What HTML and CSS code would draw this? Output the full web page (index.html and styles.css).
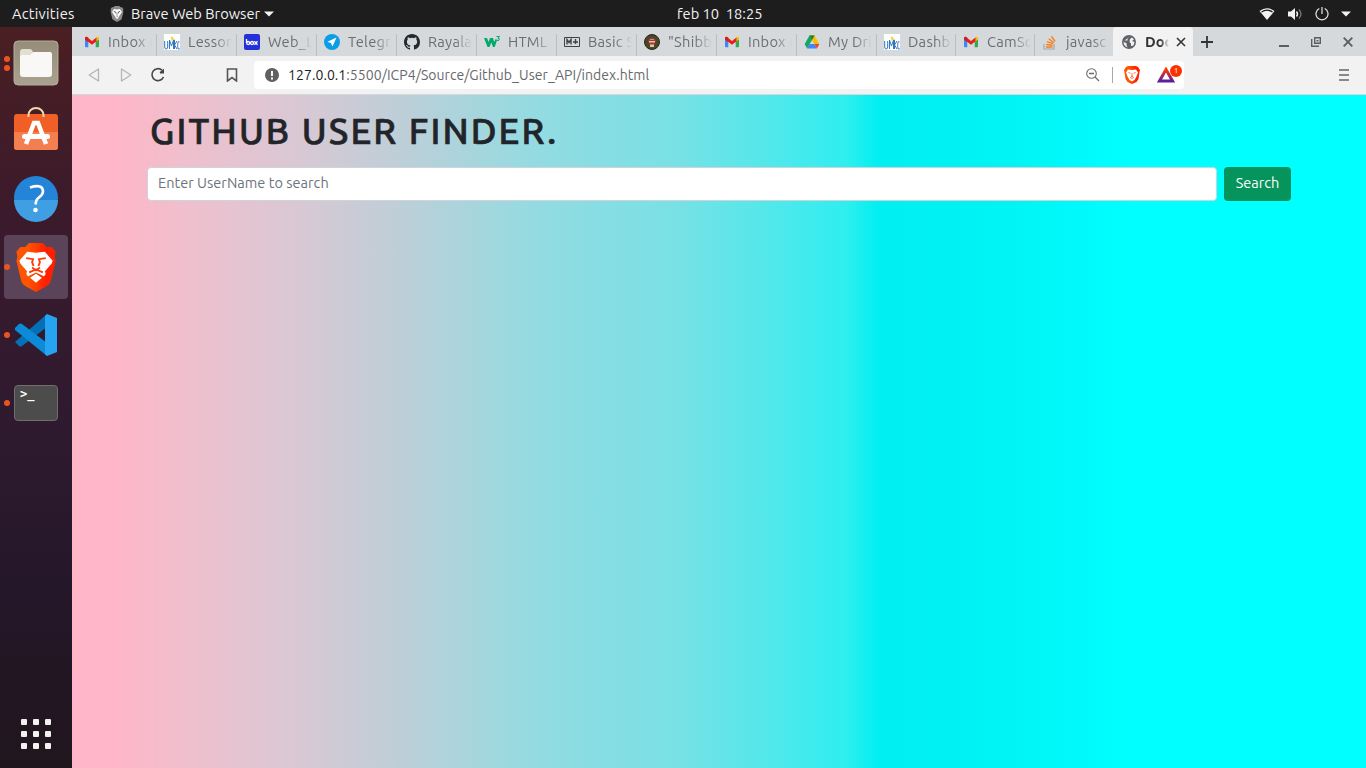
FILE: index.html
```html
<!DOCTYPE html>
<html lang="en">
<head>
<meta charset="utf-8">
<title>Github User Finder</title>
<link rel="stylesheet" href="styles.css">
</head>
<body>
<svg width="0" height="0" class="defs">
  <defs>
    <linearGradient id="braveG"><stop offset=".3" stop-color="#ff5500"/><stop offset=".75" stop-color="#ff2000"/></linearGradient>
    <linearGradient id="batG" x1="0" y1="0" x2="0" y2="1"><stop offset="0" stop-color="#ff3900"/><stop offset="1" stop-color="#5a1f9e"/></linearGradient>
    <linearGradient id="filesG" x1="0" y1="0" x2="0" y2="1"><stop offset="0" stop-color="#958d79"/><stop offset="1" stop-color="#aaa28f"/></linearGradient>
    <symbol id="gmail" viewBox="0 0 16 16"><path d="M1 5v7.300q0 .9.9.9H4.300V7z" fill="#4285f4"/><path d="M15 5v7.300q0 .9-.9.9h-2.400V7z" fill="#34a853"/><path d="M11.700 4.300V8L15 5.500V4q-.2-1.500-2-1.100z" fill="#fbbc04"/><path d="M1 4v1.500L8 10.800l4.500-3.500V3.600L8 7 3.300 3.300Q1.500 2 1 4z" fill="#e8201c"/><path d="M1 4v1.500L4.300 8V3.700Q2 1.800 1 4z" fill="#c5221f"/></symbol>
    <symbol id="umkc" viewBox="0 0 16 16"><path d="M0 0h16v16H0z" fill="#fff"/><path d="m7 2 4.500 4-3-.5L7.500 7z" fill="#f4cf22"/><path d="M.7 7v6q0 2 1.500 2T3.700 13V7M5.500 15V6l2 6 2-6v9M10.500 15V6m2.500 1-2.500 4 2.500 4M15.500 8q-1.800-2-1.800 3.500t2 3" fill="none" stroke="#3176bf" stroke-width="1"/></symbol>
    <symbol id="lion" viewBox="0 0 42 50"><path d="M10 4 14 0h14l4 4h5l4 5-1 5 1 4-5 21q-1 3-4 5L21 50 10 44q-3-2-4-5L1 18l1-4-1-5 4-5z" fill="url(#braveG)"/><path d="m12 9 9 1 9-1 8 9-1 3-7 8q2 3-1 5l-8-4-8 4q-3-2-1-5l-7-8-1-3z" fill="#fff"/><path d="m11 15.500 7 1-1 3 1.500 4M31 15.500l-7 1 1 3-1.500 4M14 30l7-3 7 3M17 25l4 3 4-3" fill="none" stroke="#ff3a08" stroke-width="1.900"/><path d="m21 31.500 6 4-6 5-6-5z" fill="#fff"/></symbol>
  </defs>
</svg>
<div class="screen">
  <header class="topbar">
    <span class="activities">Activities</span>
    <div class="appmenu">
      <svg width="14" height="16" viewBox="0 0 42 50"><path d="M10 4 14 0h14l4 4h5l4 5-1 5 1 4-5 21q-1 3-4 5L21 50 10 44q-3-2-4-5L1 18l1-4-1-5 4-5z" fill="#8b8b8b"/><path d="m12 9 9 2 9-2 6 8-1 4-6 9-3 5-5-4-5 4-3-5-6-9-1-4z" fill="#fff"/><path d="m11 17 6 2 1 5m13-7-6 2-1 5m-3 2v4" stroke="#555" stroke-width="3" fill="none"/><path d="m21 33 5 4-5 4-5-4z" fill="#fff"/></svg>
      <span class="appname">Brave Web Browser</span>
      <svg width="10" height="6" viewBox="0 0 10 6"><path d="M0 .5h10L5 5.500z" fill="#f2f2f2"/></svg>
    </div>
    <span class="clock">feb 10&nbsp; 18:25</span>
    <div class="status">
      <svg width="16" height="14" viewBox="0 0 16 14"><path d="M.5 4Q8-1.500 15.500 4L8 13z" fill="#f2f2f2"/><path d="M2.500 5q5.500-3.600 11 0" fill="none" stroke="#1d1d1d" stroke-width="1.200"/></svg>
      <svg width="16" height="14" viewBox="0 0 16 14"><path d="M1 4.500h3L8 1v12L4 9.500H1z" fill="#f2f2f2"/><path d="M9.500 4.500q2 2.500 0 5" fill="none" stroke="#f2f2f2" stroke-width="1.400"/><path d="M12 2.500q4 4.500 0 9" fill="none" stroke="#777" stroke-width="1.300"/></svg>
      <svg width="14" height="14" viewBox="0 0 14 14"><path d="M4.300 1.500a6 6 0 1 0 5.400 0M7 0v7" fill="none" stroke="#e6e6e6" stroke-width="1.200"/></svg>
      <svg width="10" height="6" viewBox="0 0 10 6"><path d="M0 .5h10L5 5.500z" fill="#f2f2f2"/></svg>
    </div>
  </header>
  <div class="desktop">
    <aside class="dock">
      <div class="launcher"><i class="dots"><b></b><b></b></i>
        <svg width="46" height="46" viewBox="0 0 46 46"><rect x="1" y="1" width="44" height="44" rx="4" fill="url(#filesG)" stroke="#b3ad9b"/><path d="M7 12q0-3 3-3h7q2 0 3 3l16 1v9H7z" fill="#e2ded1"/><path d="M7 17q0-2 2-2h8l4-3h16q2 0 2 2v20q0 3-3 3H10q-3 0-3-3z" fill="#f9f8f6"/></svg></div>
      <div class="launcher">
        <svg width="46" height="50" viewBox="0 0 46 50"><rect x="1" y="8" width="44" height="36" rx="3" fill="#f05f26"/><path d="M1 26h44v15q0 3-3 3H4q-3 0-3-3z" fill="#f37f51"/><path d="M15.500 11V9a7.500 7 0 0 1 15 0v2" fill="none" stroke="#f0d7ac" stroke-width="2"/><path d="m13 38 8-21h4l8 21" fill="none" stroke="#fff" stroke-width="4.500"/><rect x="9" y="28" width="28" height="5" rx="2.500" fill="#fff"/></svg></div>
      <div class="launcher">
        <svg width="46" height="48" viewBox="0 1 46 48"><circle cx="23" cy="24" r="22" fill="#2484d7"/><path d="M1 26h44a22 22 0 0 1-44 0z" fill="#3f9fe2"/><path d="M17 13.500q13-4 13 4 0 3-4 6t-3 7" fill="none" stroke="#fff" stroke-width="2.600"/><circle cx="22.500" cy="36" r="2.300" fill="#fff"/></svg></div>
      <div class="launcher focused"><i class="dots"><b></b></i>
        <svg width="42" height="49"><use href="#lion"/></svg></div>
      <div class="launcher"><i class="dots"><b></b></i>
        <svg width="44" height="44" viewBox="0 0 44 44"><path d="m1 29 4 4q1 1 3 0L33 14V1z" fill="#0570b5"/><path d="m1 15 4-4q1-1 3 0l25 19v13L1 17z" fill="#0c8bd8"/><path d="m33 1 10 4v34l-10 4-2-2V3z" fill="#26a4f2"/></svg></div>
      <div class="launcher"><i class="dots"><b></b></i>
        <div class="terminal">&gt;_</div></div>
      <div class="apps"><b></b><b></b><b></b><b></b><b></b><b></b><b></b><b></b><b></b></div>
    </aside>
    <section class="browser">
      <div class="tabs">
        <div class="tab"><svg width="16" height="16"><use href="#gmail"/></svg><span>Inbox (</span></div>
        <div class="tab"><svg width="16" height="16"><use href="#umkc"/></svg><span>Lesson</span></div>
        <div class="tab"><svg width="16" height="16" viewBox="0 0 16 16"><rect width="16" height="16" rx="2" fill="#2431d8"/><g fill="none" stroke="#fff" stroke-width="1.300"><path d="M2.500 5v4"/><circle cx="4.200" cy="9" r="1.500"/><circle cx="8" cy="9" r="1.500"/><path d="m10.300 7.300 3.200 3.500m0-3.500-3.200 3.500"/></g></svg><span>Web_L</span></div>
        <div class="tab"><svg width="16" height="16" viewBox="0 0 16 16"><circle cx="8" cy="8" r="8" fill="#0a9de8"/><path d="m12.500 3.500-9 4.300 3.500 1.400 1.500 3.300z" fill="#fff"/></svg><span>Telegr</span></div>
        <div class="tab"><svg width="16" height="16" viewBox="0 0 16 16"><path fill="#24292e" d="M8 0C3.580 0 0 3.580 0 8c0 3.540 2.290 6.530 5.470 7.590.4.070.55-.17.55-.38 0-.19-.01-.82-.01-1.490-2.010.37-2.530-.49-2.690-.94-.09-.23-.48-.94-.82-1.130-.28-.15-.68-.52-.01-.53.63-.01 1.080.58 1.230.82.72 1.210 1.870.87 2.330.66.070-.52.28-.87.51-1.070-1.780-.2-3.640-.89-3.640-3.950 0-.87.31-1.590.82-2.150-.08-.2-.36-1.020.08-2.120 0 0 .67-.21 2.200.82a7.600 7.600 0 0 1 4 0c1.530-1.040 2.200-.82 2.200-.82.44 1.100.16 1.920.08 2.120.51.56.82 1.270.82 2.150 0 3.070-1.870 3.750-3.650 3.950.29.25.54.73.54 1.480 0 1.070-.01 1.930-.01 2.200 0 .21.15.46.55.38A8 8 0 0 0 16 8c0-4.420-3.580-8-8-8z"/></svg><span>Rayala</span></div>
        <div class="tab"><svg width="16" height="16" viewBox="0 0 16 16"><path d="M0 4h3l1.500 4L6 4h3l1.200 4L12 4.500l1 2L10.700 13H9L7.300 8.500 5.500 13H3.500z" fill="#04aa6d"/><path d="M12.500 2.500h3L14 4.200q2 .2 1 2-1 .8-2 0" fill="none" stroke="#04aa6d"/></svg><span>HTML</span></div>
        <div class="tab"><svg width="16" height="16" viewBox="0 0 16 16"><path d="M.5 3.500h15v9H.5z" fill="none" stroke="#424242"/><path d="M3 10.500v-5l2 3 2-3v5M11.500 5v5M9 8h5" fill="none" stroke="#424242" stroke-width="1.400"/></svg><span>Basic S</span></div>
        <div class="tab"><svg width="16" height="16" viewBox="0 0 16 16"><circle cx="8" cy="8" r="7.500" fill="#4d4326" stroke="#222c22"/><path d="M4 6q4-5 8 0l-1 4q-3 4-6 0z" fill="#a33a2e"/><path d="M5 7h6v1.500H5zm1 3.500h4V13H6z" fill="#dfc4a5"/><path d="M6 5h4v1H6z" fill="#8aa0bd"/></svg><span>"Shibb</span></div>
        <div class="tab"><svg width="16" height="16"><use href="#gmail"/></svg><span>Inbox (</span></div>
        <div class="tab"><svg width="16" height="16" viewBox="0 0 16 16"><path d="M5.500 1.500h5L8 6l-5 8.500L.7 10z" fill="#11a861"/><path d="M5.500 1.500h5L15.300 10h-5z" fill="#fbbc04"/><path d="M5.500 1.500h5L8 5.900z" fill="#188038"/><path d="M3 14.500 5.500 10h5l2.500 4.500z" fill="#4285f4"/><path d="M10.500 10h4.800L13 14.500z" fill="#ea4335"/></svg><span>My Dri</span></div>
        <div class="tab narrow"><svg width="16" height="16"><use href="#umkc"/></svg><span>Dashb</span></div>
        <div class="tab narrow"><svg width="16" height="16"><use href="#gmail"/></svg><span>CamSc</span></div>
        <div class="tab narrow last"><svg width="16" height="16" viewBox="0 0 16 16"><path d="M2 10v5h10v-5" fill="none" stroke="#a6a8aa" stroke-width="1.200"/><path d="M4 13h6.500M4.200 10.500l6.300.8M5 7.700l6 2M6.800 4.800l5 4M9.500 2.200l3.500 5.300" stroke="#f48024" stroke-width="1.400"/></svg><span>javasc</span></div>
        <div class="tab active"><svg width="16" height="16" viewBox="0 0 16 16"><circle cx="8" cy="8" r="7" fill="#5f6368"/><path d="M8.500 2.500 6.500 4.500v2h-3L2 8l3.500 1v2l1 2.500Q2.500 12 2.500 7.500M9 5l2-1.500 2 2L11 7l2.500 1-1 3.500-2.500.5V9.500L8.500 8z" fill="#f2f2f2"/></svg><span>Doc</span><svg width="10" height="10" viewBox="0 0 10 10"><path d="m1 1 8 8m0-8L1 9" stroke="#333" stroke-width="1.600"/></svg></div>
        <svg class="plus" width="12" height="12" viewBox="0 0 12 12"><path d="M6 0v12M0 6h12" stroke="#333" stroke-width="1.800"/></svg>
        <div class="controls">
          <svg width="10" height="10" viewBox="0 0 10 10"><path d="M0 9h10" stroke="#5b5e62" stroke-width="2"/></svg>
          <svg width="10" height="10" viewBox="0 0 10 10"><path d="M3.700.7h5.600v5.600H3.700zM.7 2v7.300H8" fill="none" stroke="#5b5e62" stroke-width="1.400"/><path d="M5.500 3h2v1.500h-2z" fill="#5b5e62"/></svg>
          <svg width="10" height="10" viewBox="0 0 10 10"><path d="m.7.7 8.600 8.600m0-8.600L.7 9.300" stroke="#5b5e62" stroke-width="1.900"/></svg>
        </div>
      </div>
      <div class="toolbar">
        <svg width="12" height="14" viewBox="0 0 12 14"><path d="M10.500 1v12L1.200 7z" fill="none" stroke="#b5b5b5" stroke-width="1.300" stroke-linejoin="round"/></svg>
        <svg class="fwd" width="12" height="14" viewBox="0 0 12 14"><path d="M1.500 1v12l9.300-6z" fill="none" stroke="#b5b5b5" stroke-width="1.300" stroke-linejoin="round"/></svg>
        <svg class="reload" width="16" height="16" viewBox="0 0 16 16"><path d="M12 3.200A6 6 0 1 0 13.500 10" fill="none" stroke="#444" stroke-width="1.600"/><path d="M9.800 5 14 1.800v4.700h-4z" fill="#444"/></svg>
        <svg class="mark" width="12" height="14" viewBox="0 0 12 14"><path d="M1.500 1h9v12L6 9.500 1.500 13z" fill="none" stroke="#555" stroke-width="1.600"/></svg>
        <div class="address">
          <svg width="14" height="14" viewBox="0 0 14 14"><circle cx="7" cy="7" r="7" fill="#5f6062"/><path d="M7 3v5M7 9.500v2" stroke="#fff" stroke-width="2"/></svg>
          <span class="url"><em>127.0.0.1</em>:5500/ICP4/Source/Github_User_API/index.html</span>
          <svg class="lens" width="14" height="14" viewBox="0 0 14 14"><circle cx="5.500" cy="5.500" r="4.800" fill="none" stroke="#6d6d6d" stroke-width="1.100"/><path d="m9 9 4 4M3 5.500h5" stroke="#6d6d6d" stroke-width="1.300"/></svg>
          <i class="rule"></i>
          <svg class="shield" width="16" height="18" viewBox="0 0 16 18"><path d="M4 0h8l2 1 2 3-.5 2-1 7-2 3L8 18l-4.500-2-2-3-1-7L0 4l2-3z" fill="url(#braveG)"/><path d="m4 3.500 4 .5 4-.5 2 3-1.500 4-2 3.500L8 15.500 5.500 14l-2-3.500-1.500-4z" fill="#fff"/><path d="m4.500 6.500 2 .7m5-.7-2 .7M8 7v3l-1.500 1.500L8 12.500l1.500-1L8 10" fill="none" stroke="#ff4b18" stroke-width=".8"/></svg>
          <div class="bat"><svg width="18" height="16" viewBox="0 0 18 16"><path d="M9 2.500 15.500 14h-13z" fill="#fff" stroke="url(#batG)" stroke-width="3"/></svg><b>1</b></div>
        </div>
        <svg class="menu" width="10" height="12" viewBox="0 0 10 12"><path d="M0 1h10M0 6h10M0 11h10" stroke="#666" stroke-width="1.700"/></svg>
      </div>
      <main class="page">
        <h1>GITHUB USER FINDER.</h1>
        <form class="finder"><input type="text" placeholder="Enter UserName to search"><button type="button">Search</button></form>
      </main>
    </section>
  </div>
</div>
</body>
</html>
```
FILE: styles.css
```css
* { box-sizing: border-box; }
body { margin: 0; overflow: hidden; font-family: Ubuntu, "Noto Sans", sans-serif; font-size: 14.667px; }
svg { flex: none; display: block; }
.defs { position: absolute; }
.screen { width: 1366px; height: 768px; display: flex; flex-direction: column; }
.topbar { height: 27px; background: #1d1d1d; color: #f2f2f2; display: grid; grid-template-columns: 110px 567px 1fr auto; align-items: center; padding-right: 15px; white-space: pre; }
.activities { padding-left: 12px; letter-spacing: .25px; }
.appmenu { display: flex; align-items: center; }
.appname { margin: 0 0 0 7px; width: 133px; }
.status { display: flex; align-items: center; gap: 12px; }
.desktop { flex: 1; display: flex; min-height: 0; }
.dock { width: 72px; padding: 4px 4px 19px; display: flex; flex-direction: column; gap: 4px; background: linear-gradient(#4a1f23, #3b1a2b 25%, #301a2f 50%, #25172a 75%, #20161d); }
.launcher { position: relative; height: 64px; border-radius: 4px; display: flex; align-items: center; justify-content: center; }
.launcher.focused { background: #5b4459; }
.dots { position: absolute; left: 0; top: 0; bottom: 0; display: flex; flex-direction: column; justify-content: center; gap: 3px; }
.dots b { width: 6px; height: 6px; border-radius: 50%; background: #e95420; }
.terminal { width: 44px; height: 36px; border-radius: 4px; background: #4c4c4c; border: 1px solid #6f6f6d; color: #fff; font: bold 12px/17px "DejaVu Sans Mono", monospace; padding-left: 5px; }
.apps { margin: auto auto 0; display: grid; grid-template-columns: repeat(3, 6px); gap: 6px; }
.apps b { height: 6px; border-radius: 1px; background: #f2f1ef; }
.browser { flex: 1; min-width: 0; display: flex; flex-direction: column; }
.tabs { height: 29px; background: #d5d9dc; display: flex; padding-left: 4px; align-items: center; }
.tab { width: 80px; flex: none; height: 29px; padding: 0 3px 0 8px; display: flex; align-items: center; gap: 8px; color: #6b6e71; position: relative; }
.tab.narrow { width: 79px; }
.tab::after { content: ""; position: absolute; right: -1px; top: 7px; bottom: 0; width: 1px; background: #b9bdbc; }
.tab.last::after, .tab.active::after { display: none; }
.tab span { width: 45px; flex: none; overflow: hidden; white-space: nowrap; letter-spacing: .25px; mask-image: linear-gradient(90deg, #000 60%, transparent 98%); }
.tab.active { background: #f2f2f2; color: #333; border-radius: 4px 4px 0 0; }
.tab.active span { width: 24px; letter-spacing: 0; font-weight: 700; mask-image: linear-gradient(90deg, #000 65%, transparent); }
.tab.active span + svg { margin-left: -1px; }
.plus { margin-left: 8px; }
.controls { margin-left: auto; display: flex; gap: 22px; padding-right: 13px; }
.toolbar { height: 39px; background: #f2f2f2; border-bottom: 1px solid #d6d9dc; padding: 0 17px 0 16px; display: flex; align-items: center; }
.fwd { margin-left: 20px; }
.reload { margin-left: 18px; }
.mark { margin-left: 60px; }
.address { width: 930px; height: 28px; margin-left: 16px; padding: 0 2px 0 11px; border-radius: 4px; background: #fff; display: flex; align-items: center; }
.url { margin-left: 9px; color: #66686b; font-size: 14px; letter-spacing: .07px; white-space: nowrap; }
.url em { font-style: normal; color: #222; }
.lens { margin-left: auto; }
.rule { width: 1px; height: 16px; background: #a6a8aa; margin: 0 11px 0 12px; }
.bat { margin-left: 17px; width: 25px; position: relative; }
.bat b { position: absolute; left: 13px; top: -2px; width: 12px; height: 12px; border-radius: 50%; background: #fb3000; color: #fff; font-size: 8px; line-height: 12px; text-align: center; font-weight: 400; }
.menu { margin-left: auto; }
.page { flex: 1; padding: 13px 75px 0; background: linear-gradient(90deg, #ffb6c8 0, #ffb6c8 45px, #f1becc 105px, #d9c8d4 225px, #bccfd8 335px, #94dbe1 460px, #78e1e5 605px, #4ae9ec 715px, #2eeeef 775px, #00eff2 807px, #00f3f5 930px, #00ffff 1060px); }
h1 { margin: 0; height: 59px; padding-left: 3px; color: #212529; font-size: 36px; line-height: 46px; font-weight: 500; letter-spacing: 2.100px; -webkit-text-stroke: .7px #212529; white-space: nowrap; }
.finder { display: flex; gap: 7px; margin: 0; }
.finder input { flex: 1; min-width: 0; height: 34px; border: 1px solid #ced4da; border-radius: 4px; padding: 0 10px 3px; background: #fff; font: inherit; font-size: 14.500px; letter-spacing: .03px; }
.finder input::placeholder { color: #6c757d; opacity: 1; }
.finder button { width: 67px; height: 34px; border: 0; border-radius: 4px; background: #05945b; color: #fff; font: inherit; font-size: 14.500px; padding: 0 0 3px; }
```
